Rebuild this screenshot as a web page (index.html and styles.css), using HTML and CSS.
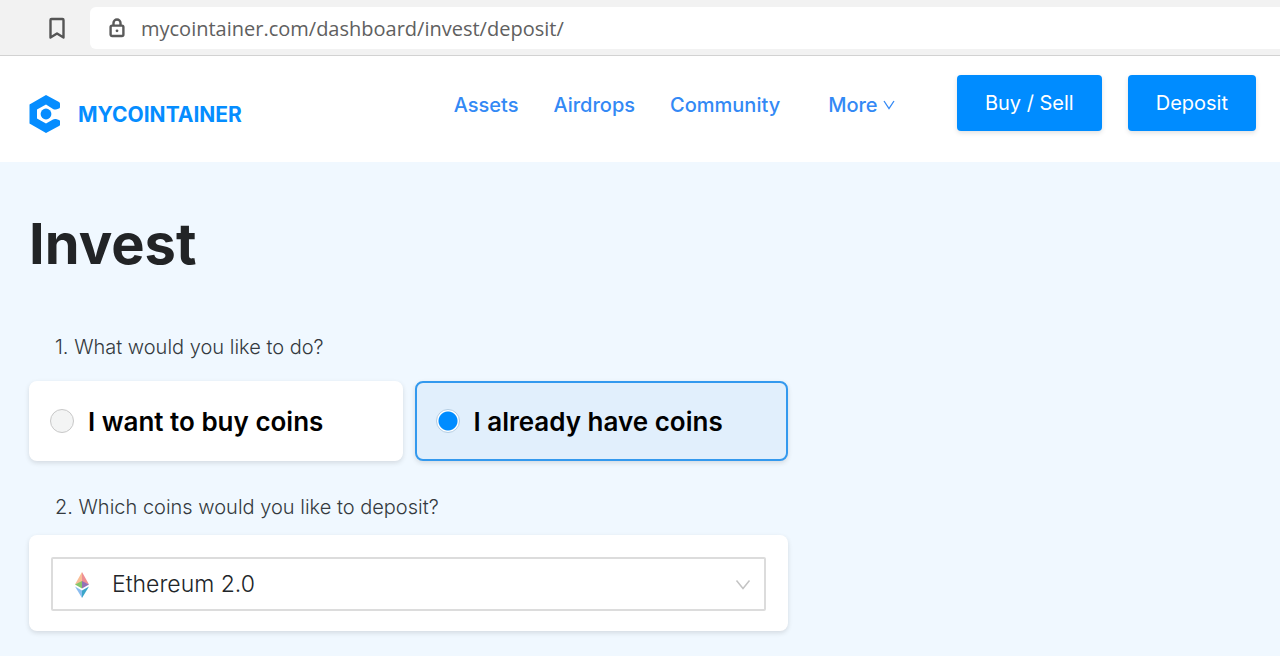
FILE: index.html
```html
<!DOCTYPE html>
<html lang="en">
<head>
  <meta charset="UTF-8" />
  <meta name="viewport" content="width=device-width, initial-scale=1.0"/>
  <title>Invest</title>
  <link rel="stylesheet" href="styles.css">
</head>
<body>
  <div class="toolbar">
    <button class="bookmark" aria-label="Bookmark">
      <svg width="18" height="24" viewBox="0 0 18 24" fill="none" stroke="#555" stroke-width="2.4" stroke-linejoin="round">
        <path d="M3.5 3h11a1 1 0 0 1 1 1v17.500l-6.500-4-6.500 4V4a1 1 0 0 1 1-1z"/>
      </svg>
    </button>
    <div class="address">
      <svg width="18" height="22" viewBox="0 0 18 22" fill="none" stroke="#5a5a5a" stroke-width="2.400">
        <rect x="2.600" y="8.600" width="12.800" height="10.400" rx="1.500"/>
        <path d="M5.500 8.500V6a3.500 3.500 0 0 1 7 0v2.500"/>
        <circle cx="9" cy="13.800" r="1.400" fill="#5a5a5a" stroke="none"/>
      </svg>
      <input class="url" type="text" aria-label="Address" value="mycointainer.com/dashboard/invest/deposit/">
    </div>
  </div>

  <header class="header">
    <a class="logo" href="#">
      <svg width="32" height="38" viewBox="0 0 32 38">
        <path fill="#058dff" d="M17 0L30 7q1 .6 1 1.800V12q0 1.200-1 1.500l-3 1q-1.500.4-3-.5L17 9.500 8 14.500v9L17 28.500l7-4q1.500-.9 3-.4l3 1q1 .4 1 1.500V29.500q0 1-1 1.500L17 38 .5 28.500v-19z"/>
        <circle cx="17" cy="19" r="5.400" fill="#058dff"/>
      </svg>
      <span>MYCOINTAINER</span>
    </a>
    <nav class="nav">
      <a href="#">Assets</a>
      <a href="#">Airdrops</a>
      <a href="#">Community</a>
      <a class="more" href="#">More
        <svg width="12" height="12" viewBox="0 0 12 12" fill="none" stroke="#3389f5" stroke-width="1.300">
          <path d="M1 1l5 7.500L11 1"/>
        </svg>
      </a>
    </nav>
    <div class="actions">
      <button class="btn">Buy / Sell</button>
      <button class="btn">Deposit</button>
    </div>
  </header>

  <main class="main">
    <h1>Invest</h1>
    <form class="invest-form">
      <p class="question" id="action-label">1. What would you like to do?</p>
      <div class="options" role="radiogroup" aria-labelledby="action-label">
        <label class="option">
          <input type="radio" name="action" value="buy">
          <span>I want to buy coins</span>
        </label>
        <label class="option">
          <input type="radio" name="action" value="deposit" checked>
          <span>I already have coins</span>
        </label>
      </div>

      <label class="question" for="coin">2. Which coins would you like to deposit?</label>
      <div class="card">
        <div class="select-box">
          <svg class="coin-icon" width="16" height="26" viewBox="0 0 16 26">
            <path fill="#f9bd96" d="M8 0L1 12.500 8 10z"/>
            <path fill="#ee8f94" d="M8 0l7 12.500L8 10z"/>
            <path fill="#86c66a" d="M1 12.500L8 9v7.500z"/>
            <path fill="#9272b5" d="M15 12.500L8 9v7.500z"/>
            <path fill="#8bbdf0" d="M1 14.500l7 4V26z"/>
            <path fill="#3ba6c9" d="M15 14.500l-7 4V26z"/>
          </svg>
          <select id="coin">
            <option>Ethereum 2.0</option>
          </select>
          <svg class="arrow" width="16" height="12" viewBox="0 0 16 12" fill="none" stroke="#c4c4c4" stroke-width="1.500">
            <path d="M1.500 1.500L8 9.500l6.500-8"/>
          </svg>
        </div>
      </div>
    </form>
  </main>
</body>
</html>
```
FILE: styles.css
```css
* {
  box-sizing: border-box;
}

body {
  margin: 0;
  min-height: 100vh;
  font-family: Inter, "Liberation Sans", sans-serif;
  background: #f0f8ff;
  color: #212529;
}

button,
input,
select {
  font-family: inherit;
}

/* Browser bar */
.toolbar {
  display: flex;
  align-items: center;
  gap: 20px;
  padding: 7px 0 6px 44px;
  background: #f2f2f2;
  border-bottom: 1px solid #d2d2d2;
}

.bookmark {
  display: flex;
  padding: 0 4px;
  border: none;
  background: none;
}

.address {
  flex: 1;
  display: flex;
  align-items: center;
  gap: 15px;
  height: 42px;
  padding-left: 18px;
  background: #fff;
  border-radius: 6px 0 0 6px;
}

.url {
  flex: 1;
  padding: 0;
  border: none;
  outline: none;
  background: none;
  font-family: "Open Sans", sans-serif;
  font-size: 20px;
  color: #606060;
}

/* Header */
.header {
  display: flex;
  align-items: flex-start;
  padding: 19px 24px 27px 29px;
  background: #fff;
}

.logo {
  display: flex;
  align-items: center;
  gap: 17px;
  padding-top: 20px;
  color: #058dff;
  font-size: 21px;
  font-weight: 700;
  text-decoration: none;
}

.nav {
  display: flex;
  gap: 35px;
  margin-left: auto;
  line-height: 60px;
}

.nav a {
  color: #3389f5;
  font-size: 20px;
  font-weight: 500;
  text-decoration: none;
}

.nav .more {
  margin-left: 13px;
}

.actions {
  display: flex;
  gap: 26px;
  margin-left: 62px;
}

.btn {
  height: 56px;
  padding: 0 28px;
  border: none;
  border-radius: 4px;
  background: #008cff;
  box-shadow: 0 2px 5px rgba(0, 0, 0, 0.12);
  color: #fff;
  font-size: 20px;
  cursor: pointer;
}

/* Content */
.main {
  padding: 48px 29px 24px;
}

h1 {
  margin: 0 0 53px;
  font-size: 56px;
  line-height: 68px;
  font-weight: 700;
  color: #222426;
}

.invest-form {
  max-width: 759px;
}

.question {
  display: block;
  margin: 0;
  padding-left: 26px;
  font-size: 20px;
  line-height: 32px;
  font-weight: 300;
  color: #343a40;
}

.options {
  display: grid;
  grid-template-columns: 1fr 1fr;
  gap: 12px;
  margin: 18px 0 30px;
}

.option {
  display: flex;
  align-items: center;
  gap: 14px;
  height: 80px;
  padding: 0 19px;
  border: 2px solid #fff;
  border-radius: 8px;
  background: #fff;
  box-shadow: 0 2px 5px rgba(0, 0, 0, 0.12);
  color: #000;
  font-size: 26px;
  font-weight: 600;
}

.option:has(input:checked) {
  border-color: #3399ee;
  background: #e1effc;
}

.option input {
  appearance: none;
  width: 24px;
  height: 24px;
  margin: 0;
  border: 1px solid #c8c8c8;
  border-radius: 50%;
  background: #f3f4f4;
}

.option input:checked {
  border-color: #b4cde2;
  background: radial-gradient(circle, #008cff 9px, #fff 10px);
}

.card {
  margin-top: 12px;
  padding: 22px 22px 20px;
  border-radius: 8px;
  background: #fff;
  box-shadow: 0 2px 5px rgba(0, 0, 0, 0.12);
}

.select-box {
  position: relative;
}

.coin-icon {
  position: absolute;
  left: 23px;
  top: 15px;
}

.select-box select {
  appearance: none;
  display: block;
  width: 100%;
  height: 54px;
  padding: 0 50px 0 59px;
  border: 2px solid #dcdcdc;
  border-radius: 2px;
  background: #fff;
  color: #212529;
  font-size: 23px;
  font-weight: 300;
}

.arrow {
  position: absolute;
  right: 15px;
  top: 22px;
  pointer-events: none;
}
```
